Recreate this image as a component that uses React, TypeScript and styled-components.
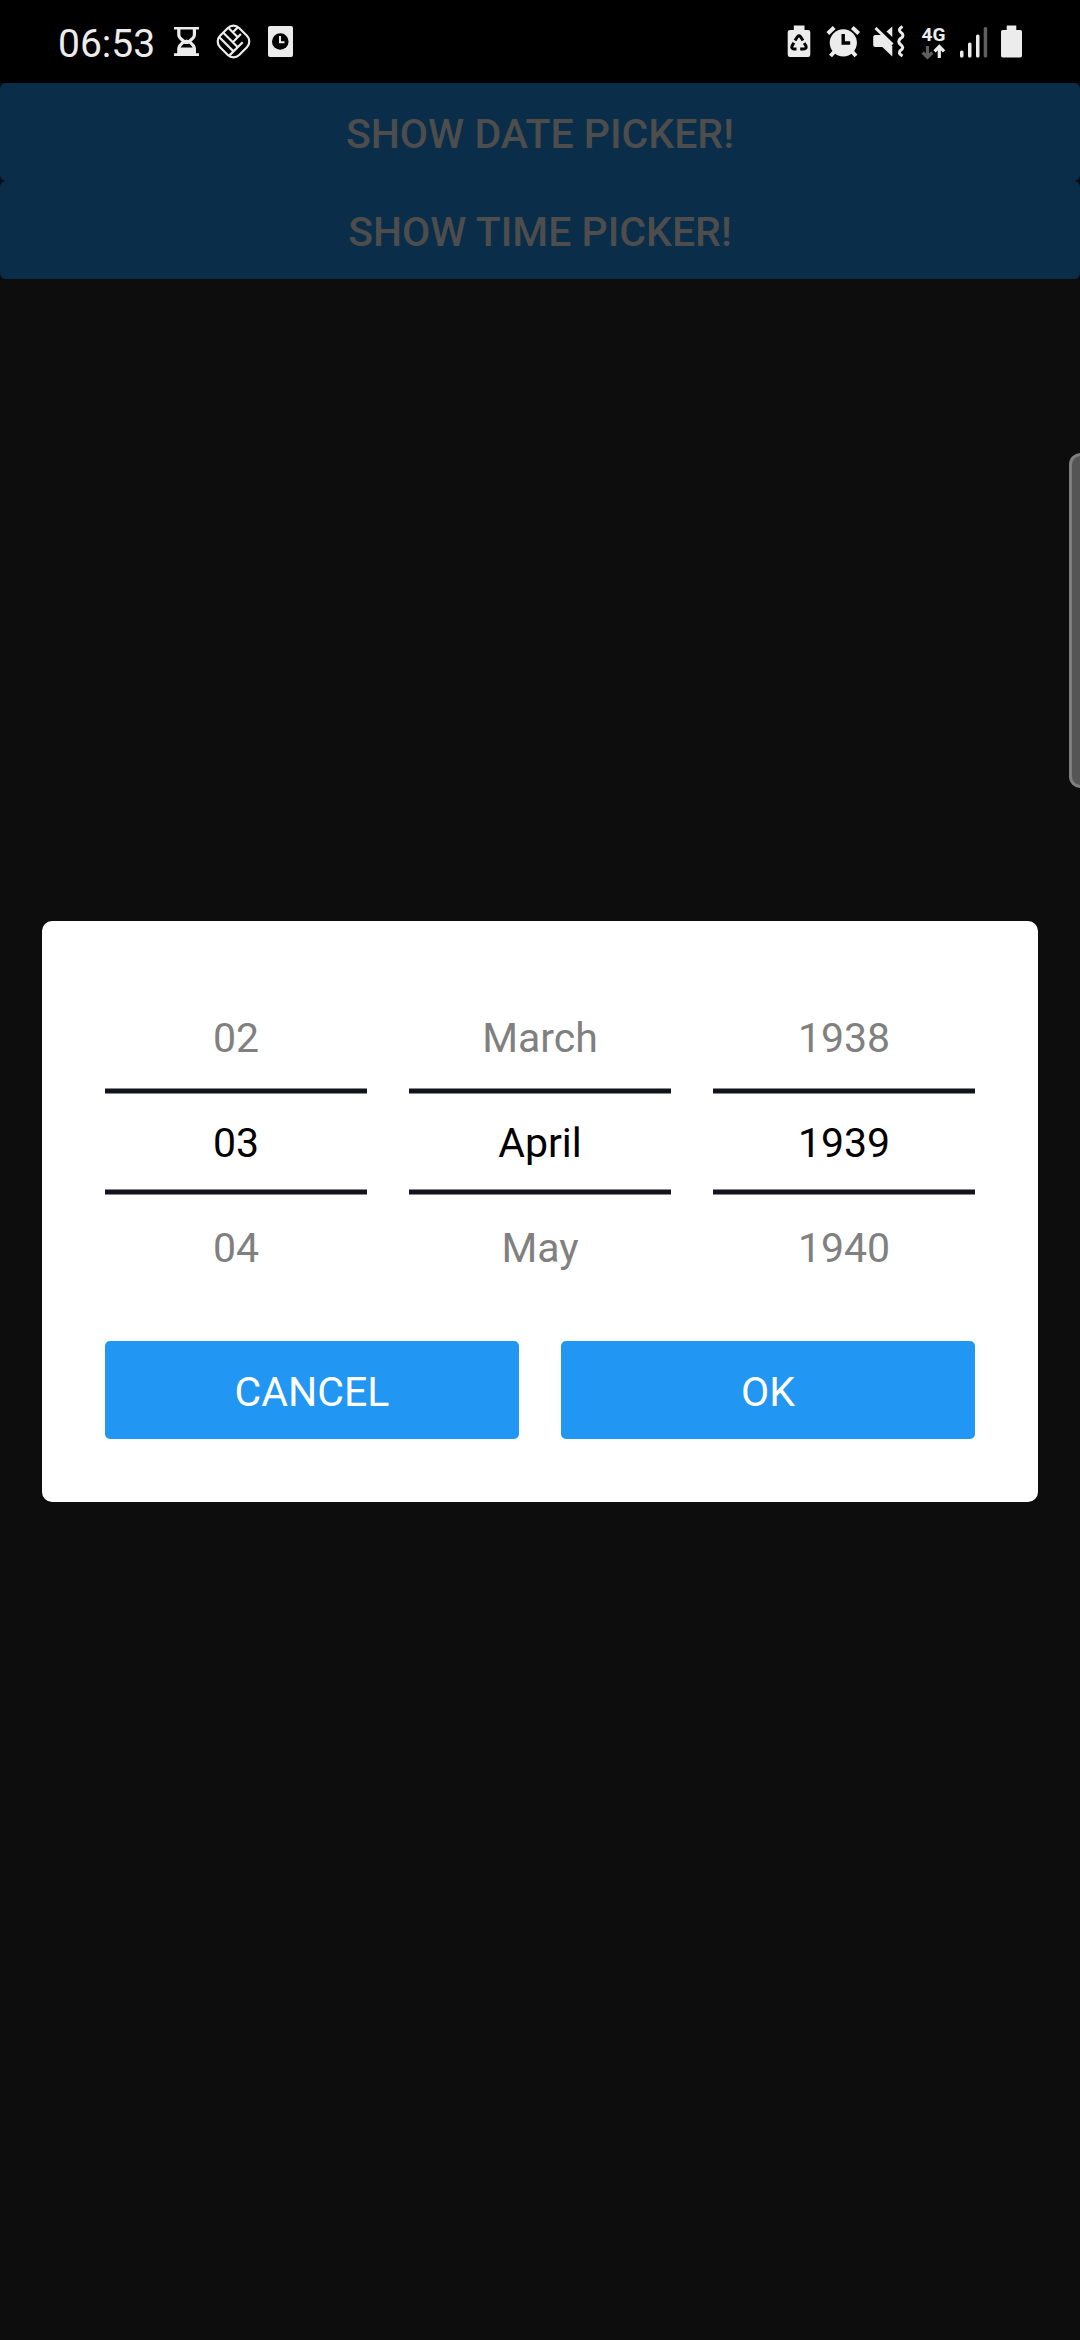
import React from "react";
import styled, { createGlobalStyle, css } from "styled-components";

const GlobalStyle = createGlobalStyle`
  *, *::before, *::after { box-sizing: border-box; }
  html, body { margin: 0; padding: 0; background: #0d0d0d; }
  body { font-family: Roboto, "Noto Sans", sans-serif; overflow: hidden; }
`;

const Screen = styled.div`
  position: relative;
  display: flex;
  flex-direction: column;
  width: 1080px;
  height: 2340px;
  background: #0d0d0d;
  overflow: hidden;
`;

const StatusBar = styled.header`
  display: flex;
  justify-content: space-between;
  align-items: center;
  height: 83px;
  padding: 1px 56px 0 58px;
  background: #000;
`;

const StatusGroup = styled.div`
  display: flex;
  align-items: center;
  gap: 10px;
`;

const Clock = styled.span`
  width: 104px;
  font-size: 39px;
  line-height: 40px;
  color: #ececec;
  padding-top: 4px;
`;

const Glyph = styled.svg`
  display: block;
  height: 36px;
`;

const PageActions = styled.div`
  display: flex;
  flex-direction: column;
`;

const DimmedButton = styled.button`
  height: 98px;
  border: 0;
  padding: 4px 0 0;
  border-radius: 6px;
  background: #0a2d49;
  color: #4d4d4d;
  font: 500 41px/48px Roboto, sans-serif;
`;

const EdgePanelHandle = styled.div`
  position: absolute;
  top: 453px;
  right: -12px;
  width: 23px;
  height: 335px;
  border: 3px solid #7f7f7f;
  border-radius: 12px;
  background: #555;
`;

const Dialog = styled.section`
  display: flex;
  flex-direction: column;
  gap: 42px;
  margin: 642px 42px 0;
  padding: 63px;
  border-radius: 10px;
  background: #fff;
`;

const Wheels = styled.div`
  display: grid;
  grid-template-columns: repeat(3, 1fr);
  gap: 42px;
`;

const Wheel = styled.div`
  display: flex;
  flex-direction: column;
`;

const separator = css`
  content: "";
  position: absolute;
  left: 0;
  right: 0;
  height: 6px;
  border: solid #88888c;
  border-width: 1px 0;
  background: #13131b;
`;

const WheelItem = styled.div<{ $selected?: boolean }>`
  position: relative;
  display: flex;
  align-items: center;
  justify-content: center;
  height: 105px;
  padding-top: 3px;
  font-size: 41px;
  line-height: 48px;
  color: ${(p) => (p.$selected ? "#000" : "#808080")};
  ${(p) =>
    p.$selected &&
    css`
      &::before { ${separator} top: -1px; }
      &::after { ${separator} bottom: -1px; }
    `}
`;

const DialogActions = styled.div`
  display: grid;
  grid-template-columns: 1fr 1fr;
  gap: 42px;
`;

const ActionButton = styled.button`
  height: 98px;
  border: 0;
  padding: 4px 0 0;
  border-radius: 5px;
  background: #2196f3;
  color: #fff;
  font: 400 41px/48px Roboto, sans-serif;
`;

const INK = "#ececec";

const Hourglass = () => (
  <Glyph width="32" viewBox="172 24 32 36" fill={INK}>
    <path d="M174 27h25v2.400h-25zM174 53.200h25v2.800h-25z" />
    <path d="M178.800 29v6q0 2.600 5.400 6.500q-5.400 3.900-5.400 7.500v5h15.600v-5q0-3.600-5.400-7.500q5.400-3.900 5.400-6.500v-6" fill="none" stroke={INK} strokeWidth="3.200" />
    <path d="M178 47.500h17.300v6.500h-17.300zM183 41l3.500-1.500l3.500 1.500l-1.500 3h-4z" />
  </Glyph>
);

const WovenDiamond = () => (
  <Glyph width="40" viewBox="214 24 40 36" fill="none" stroke={INK} strokeWidth="2.200">
    <g transform="translate(233.5 41.5) rotate(45)">
      <rect x="-13.500" y="-13.500" width="27" height="27" rx="8" />
      <path d="M-13 7H7M-13 1H7M7 -6V13M-13 -6H0M0 -10.500V1M-7 -13V-6" />
    </g>
  </Glyph>
);

const ClockCard = () => (
  <Glyph width="32" viewBox="264 24 32 36">
    <rect x="268" y="26" width="25" height="31" rx="2" fill={INK} />
    <circle cx="280.300" cy="41.500" r="8.300" fill="#000" />
    <path d="M280 36v6.300h4.500" fill="none" stroke={INK} strokeWidth="2" />
  </Glyph>
);

const RecycleBattery = () => (
  <Glyph width="30" viewBox="784.5 24 30 36">
    <path d="M793.300 25.500h10.700v4.500h3.500q2.300 0 2.300 2.300v22.500q0 2.300-2.300 2.300h-18q-2.300 0-2.300-2.300v-22.500q0-2.300 2.300-2.300h3.800z" fill={INK} />
    <path d="M794.500 40.500l2.500-3.800q1.500-1.800 3 0l2.500 3.800M803.700 43l1.800 3q.8 2.700-1.800 3h-4M796 49h-2.800q-2.600-.5-1.700-3l1.900-3.300" fill="none" stroke="#000" strokeWidth="3" />
  </Glyph>
);

const Alarm = () => (
  <Glyph width="38" viewBox="825 24 38 36">
    <circle cx="843.300" cy="42.800" r="13.600" fill={INK} />
    <path d="M827.800 33.500l6.400-6M852.300 27.500l6.400 6" stroke={INK} strokeWidth="4" />
    <path d="M834.500 51.500l-4 4.500M852 51.500l4 4.500" stroke={INK} strokeWidth="4" />
    <path d="M843.200 34v9h7" fill="none" stroke="#000" strokeWidth="3.400" />
  </Glyph>
);

const MuteVibrate = () => (
  <Glyph width="34" viewBox="872.5 24 34 36">
    <path d="M872.700 37q0-2 2-2h6.800l10.300 11v10.500l-10-9.500h-7q-2.100 0-2.100-2zM886 31.500l5.800-5v10.500z" fill={INK} />
    <path d="M875 28l17 16.500" stroke={INK} strokeWidth="3" />
    <path d="M902 26.500q-5 3-2 5.500q5 3.500 0 6.500q-3.500 3 0 6q4.500 3.200 0 6q-3.200 2.500 2 5.500" fill="none" stroke={INK} strokeWidth="3" />
  </Glyph>
);

const Network4G = () => (
  <Glyph width="32" viewBox="917 24 32 36" fill="none" strokeWidth="3.200">
    <text x="921.600" y="40.600" fontSize="19" fontWeight="700" fill={INK}>4G</text>
    <path d="M927.500 46v10.500M922.700 52.500l4.800 4.800l4.800-4.800" stroke="#5f5f5f" />
    <path d="M939.300 58v-10.500M934.500 51.300l4.800-4.800l4.800 4.800" stroke={INK} />
  </Glyph>
);

const Signal = () => (
  <Glyph width="31" viewBox="959 24 31 36" fill={INK}>
    <rect x="960" y="50.500" width="3.500" height="7" rx="1.500" />
    <rect x="968" y="42.500" width="3.500" height="15" rx="1.500" />
    <rect x="976" y="34.500" width="3.500" height="23" rx="1.500" />
    <rect x="983.700" y="27" width="3.500" height="30.500" rx="1.500" fill="#5f5f5f" />
  </Glyph>
);

const Battery = () => (
  <Glyph width="24" viewBox="1000 24 24 36" fill={INK}>
    <path d="M1006.700 25.500h9.600v4.500h4q1.700 0 1.700 1.700v24q0 1.800-1.700 1.800h-17.600q-1.700 0-1.700-1.800v-24q0-1.700 1.700-1.700h4z" />
  </Glyph>
);

const wheels = [
  ["02", "03", "04"],
  ["March", "April", "May"],
  ["1938", "1939", "1940"],
];

export default function App() {
  return (
    <>
      <GlobalStyle />
      <Screen>
        <StatusBar>
          <StatusGroup>
            <Clock>06:53</Clock>
            <Hourglass />
            <WovenDiamond />
            <ClockCard />
          </StatusGroup>
          <StatusGroup>
            <RecycleBattery />
            <Alarm />
            <MuteVibrate />
            <Network4G />
            <Signal />
            <Battery />
          </StatusGroup>
        </StatusBar>
        <PageActions>
          <DimmedButton>SHOW DATE PICKER!</DimmedButton>
          <DimmedButton>SHOW TIME PICKER!</DimmedButton>
        </PageActions>
        <EdgePanelHandle />
        <Dialog role="dialog">
          <Wheels>
            {wheels.map((items) => (
              <Wheel key={items[1]}>
                {items.map((item, i) => (
                  <WheelItem key={item} $selected={i === 1}>
                    {item}
                  </WheelItem>
                ))}
              </Wheel>
            ))}
          </Wheels>
          <DialogActions>
            <ActionButton>CANCEL</ActionButton>
            <ActionButton>OK</ActionButton>
          </DialogActions>
        </Dialog>
      </Screen>
    </>
  );
}
